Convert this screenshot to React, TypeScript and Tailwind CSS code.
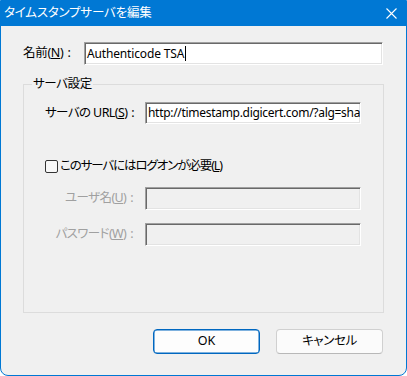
import React from "react";

const font = { fontFamily: '"Noto Sans", "Noto Sans CJK JP", sans-serif' };

function Sunken({
  className,
  disabled,
  children,
}: {
  className: string;
  disabled?: boolean;
  children?: React.ReactNode;
}) {
  return (
    <div
      className={`${className} shrink-0 border border-t-[#a0a0a0] border-l-[#a0a0a0] border-b-white border-r-white shadow-[inset_1px_1px_0_#696969,inset_-1px_-1px_0_#e3e3e3] ${
        disabled ? "bg-[#f0f0f0]" : "bg-white"
      } overflow-hidden whitespace-nowrap flex items-center pl-[2px] text-[12px] tracking-[-0.15px] text-black`}
    >
      {children}
    </div>
  );
}

export default function App() {
  return (
    <div
      style={font}
      className="w-[407px] h-[376px] bg-[#f0f0f0] border border-[#0078d4] rounded-b-[8px] overflow-hidden flex flex-col text-[12.5px] text-black leading-none [font-feature-settings:'palt']"
    >
      <div className="h-[25px] bg-[#0078d4] flex items-center justify-between pl-[3px] pr-[9px] shrink-0">
        <span className="text-white text-[12.5px] tracking-[-0.2px]">タイムスタンプサーバを編集</span>
        <svg width="11" height="11" viewBox="0 0 11 11">
          <path d="M0.5 0.5 L10.5 10.5 M10.5 0.5 L0.5 10.5" stroke="white" strokeWidth="1.1" />
        </svg>
      </div>

      <div className="flex flex-col pl-[22px] pr-[22px] pt-[16px]">
        <div className="flex items-center h-[23px]">
          <span className="w-[61px] shrink-0 tracking-[-0.3px]">
            名前(<span className="underline">N</span>)<span className="ml-[4px]">:</span>
          </span>
          <Sunken className="w-[299px] h-[23px]">
            <span>Authenticode TSA</span>
            <span className="w-px h-[15px] bg-black ml-px" />
          </Sunken>
        </div>

        <fieldset className="mt-[11px] border border-[#dcdcdc] h-[237px] p-0">
          <legend className="ml-[8px] px-[1px] leading-[16px] tracking-[-0.4px]">サーバ設定</legend>

          <div className="flex flex-col px-[21px]">
            <div className="flex items-center h-[22px] mt-[10px]">
              <span className="w-[100px] shrink-0 tracking-[-0.6px]">
                サーバの URL(<span className="underline">S</span>)<span className="ml-[4px]">:</span>
              </span>
              <Sunken className="w-[216px] h-[22px]">
                <span className="tracking-[-0.3px]">http://timestamp.digicert.com/?alg=sha256</span>
              </Sunken>
            </div>

            <label className="flex items-center mt-[35px] h-[14px]">
              <span className="w-[13px] h-[13px] border border-[#333333] rounded-[2px] bg-[#f7f7f7] shrink-0" />
              <span className="ml-[2px] tracking-[-1.1px]">
                このサーバにはログオンが必要(<span className="underline">L</span>)
              </span>
            </label>

            <div className="flex items-center h-[23px] mt-[14px] text-[#a0a0a0]">
              <span className="w-[100px] shrink-0 text-right pr-[12px] tracking-[-0.6px]">
                ユーザ名(<span className="underline">U</span>)<span className="ml-[4px]">:</span>
              </span>
              <Sunken className="w-[216px] h-[23px]" disabled />
            </div>

            <div className="flex items-center h-[23px] mt-[13px] text-[#a0a0a0]">
              <span className="w-[100px] shrink-0 text-right pr-[12px] tracking-[-0.6px]">
                パスワード(<span className="underline">W</span>)<span className="ml-[4px]">:</span>
              </span>
              <Sunken className="w-[216px] h-[23px]" disabled />
            </div>
          </div>
        </fieldset>

        <div className="flex justify-end gap-[16px] mt-[16px] pr-[1px]">
          <button className="w-[107px] h-[25px] rounded-[4px] border border-[#0067c0] bg-[#fdfdfd] text-[12.5px] shadow-[inset_0_0_0_0.5px_#0067c0]">
            OK
          </button>
          <button className="w-[107px] h-[25px] rounded-[4px] border border-[#d0d0d0] border-b-[#b8b8b8] bg-[#fbfbfb] text-[12.5px] tracking-[-0.4px]">
            キャンセル
          </button>
        </div>
      </div>
    </div>
  );
}
